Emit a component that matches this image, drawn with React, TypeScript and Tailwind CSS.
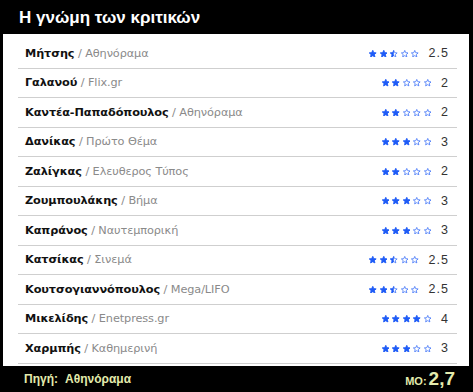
import React from 'react';

interface Review {
    critic: string;
    source: string;
    rating: number;
}

const reviews: Review[] = [
    { critic: 'Μήτσης', source: 'Αθηνόραμα', rating: 2.5 },
    { critic: 'Γαλανού', source: 'Flix.gr', rating: 2 },
    { critic: 'Καντέα-Παπαδόπουλος', source: 'Αθηνόραμα', rating: 2 },
    { critic: 'Δανίκας', source: 'Πρώτο Θέμα', rating: 3 },
    { critic: 'Ζαλίγκας', source: 'Ελευθερος Τύπος', rating: 2 },
    { critic: 'Ζουμπουλάκης', source: 'Βήμα', rating: 3 },
    { critic: 'Καπράνος', source: 'Ναυτεμπορική', rating: 3 },
    { critic: 'Κατσίκας', source: 'Σινεμά', rating: 2.5 },
    { critic: 'Κουτσογιαννόπουλος', source: 'Mega/LIFO', rating: 2.5 },
    { critic: 'Μικελίδης', source: 'Enetpress.gr', rating: 4 },
    { critic: 'Χαρμπής', source: 'Καθημερινή', rating: 3 },
];

const STAR = 'M5 0.6 L6.3 3.6 L9.5 3.9 L7.1 6 L7.8 9.2 L5 7.5 L2.2 9.2 L2.9 6 L0.5 3.9 L3.7 3.6 Z';

function Star({ fill, id }: { fill: number; id: string }) {
    return (
        <svg width="7.5" height="7.5" viewBox="0 0 10 10" className="block">
            <defs>
                <clipPath id={id}>
                    <rect x="0" y="0" width={10 * fill} height="10" />
                </clipPath>
            </defs>
            <path d={STAR} fill="none" stroke="#1f5cf7" strokeWidth="0.9" strokeLinejoin="round" />
            {fill > 0 && <path d={STAR} fill="#1f5cf7" stroke="#1f5cf7" strokeWidth="0.9" strokeLinejoin="round" clipPath={`url(#${id})`} />}
        </svg>
    );
}

function Stars({ rating, row }: { rating: number; row: number }) {
    return (
        <div className="flex items-center gap-[3px]">
            {[0, 1, 2, 3, 4].map((i) => {
                const f = Math.max(0, Math.min(1, rating - i));
                return <Star key={i} fill={f} id={`s-${row}-${i}`} />;
            })}
        </div>
    );
}

export default function App() {
    return (
        <div className="w-[473px] h-[392px] bg-black flex flex-col" style={{ fontFamily: '"Liberation Sans", Arial, sans-serif' }}>
            <div className="h-[34px] flex items-center pl-[19px]">
                <h1 className="text-white text-[17px] font-bold leading-none">Η γνώμη των κριτικών</h1>
            </div>
            <div className="ml-[3px] mr-[4px] h-[332px] bg-white pt-[5px] pl-[15px] pr-[12px]">
                {reviews.map((r, idx) => (
                    <div key={r.critic} className="h-[29.5px] flex items-center justify-between border-b border-[#cfcfcf] pl-[7px] pr-[8px]">
                        <div className="text-[11.3px] leading-none font-['DejaVu_Sans',sans-serif] tracking-[-0.1px]">
                            <span className="font-bold text-[#111]">{r.critic}</span>
                            <span className="text-[#8a8a8a]"> / {r.source}</span>
                        </div>
                        <div className="flex items-center gap-[10px]">
                            <Stars rating={r.rating} row={idx} />
                            <span className="text-[12.5px] text-[#333] tracking-[1px] leading-none">{String(r.rating)}</span>
                        </div>
                    </div>
                ))}
            </div>
            <div className="flex-1 flex items-center justify-between pl-[24px] pr-[18px] text-[#e3ebad] font-bold">
                <div className="text-[12px]">
                    Πηγή:<span className="ml-[7px]">Αθηνόραμα</span>
                </div>
                <div className="flex items-baseline">
                    <span className="text-[11px]">ΜΟ:</span>
                    <span className="text-[19px] ml-[2px] leading-none font-['Liberation_Sans_Narrow','Liberation_Sans',sans-serif]">2,7</span>
                </div>
            </div>
        </div>
    );
}
